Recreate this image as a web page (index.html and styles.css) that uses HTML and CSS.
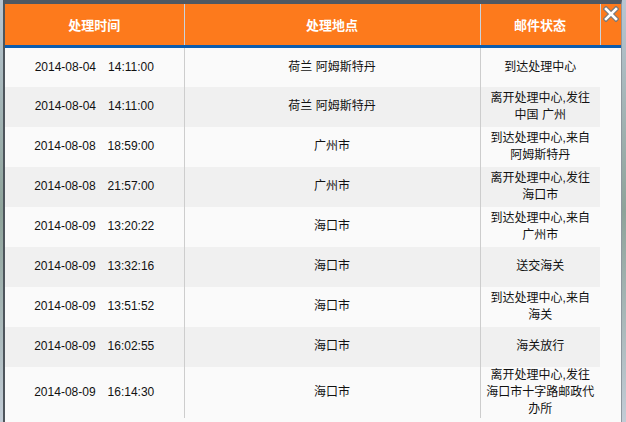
FILE: index.html
```html
<!DOCTYPE html>
<html>
<head>
<meta charset="utf-8">
<link rel="stylesheet" href="styles.css">
</head>
<body>
<div class="window">
  <table class="grid">
    <colgroup>
      <col class="c1"><col class="c2"><col class="c3"><col class="c4">
    </colgroup>
    <thead>
      <tr>
        <th>处理时间</th>
        <th>处理地点</th>
        <th>邮件状态</th>
        <th class="close">
          <svg width="16" height="16" viewBox="0 0 16 16">
            <path d="M3 3 L13 13 M13 3 L3 13" stroke="#7a7a7a" stroke-width="5" stroke-linecap="square"/>
            <path d="M3 3 L13 13 M13 3 L3 13" stroke="#ffffff" stroke-width="2.6" stroke-linecap="square"/>
          </svg>
        </th>
      </tr>
    </thead>
    <tbody>
      <tr><td>2014-08-04<span class="t">14:11:00</span></td><td>荷兰 阿姆斯特丹</td><td class="st">到达处理中心</td><td class="pad"></td></tr>
      <tr><td>2014-08-04<span class="t">14:11:00</span></td><td>荷兰 阿姆斯特丹</td><td class="st">离开处理中心,发往中国 广州</td><td class="pad"></td></tr>
      <tr><td>2014-08-08<span class="t">18:59:00</span></td><td>广州市</td><td class="st">到达处理中心,来自阿姆斯特丹</td><td class="pad"></td></tr>
      <tr><td>2014-08-08<span class="t">21:57:00</span></td><td>广州市</td><td class="st">离开处理中心,发往海口市</td><td class="pad"></td></tr>
      <tr><td>2014-08-09<span class="t">13:20:22</span></td><td>海口市</td><td class="st">到达处理中心,来自广州市</td><td class="pad"></td></tr>
      <tr><td>2014-08-09<span class="t">13:32:16</span></td><td>海口市</td><td class="st">送交海关</td><td class="pad"></td></tr>
      <tr><td>2014-08-09<span class="t">13:51:52</span></td><td>海口市</td><td class="st">到达处理中心,来自海关</td><td class="pad"></td></tr>
      <tr><td>2014-08-09<span class="t">16:02:55</span></td><td>海口市</td><td class="st">海关放行</td><td class="pad"></td></tr>
      <tr><td>2014-08-09<span class="t">16:14:30</span></td><td>海口市</td><td class="st">离开处理中心,发往海口市十字路邮政代办所</td><td class="pad"></td></tr>
    </tbody>
  </table>
</div>
</body>
</html>
```
FILE: styles.css
```css
html, body {
  margin: 0;
  padding: 0;
  height: 100%;
  overflow: hidden;
}
body {
  background: linear-gradient(180deg, #b9c6d2 0%, #8ea39a 50%, #c2ccd6 100%);
  font-family: "Liberation Sans", "Noto Sans CJK SC", sans-serif;
  font-size: 12px;
  color: #111;
}
.window {
  margin-left: 3px;
  width: 616px;
  height: 430px;
  border-left: 2px solid #4e555c;
  border-right: 1px solid #8f979f;
  border-top: 4px solid #4f5862;
  background: #fafafa;
}
.grid {
  border-collapse: collapse;
  table-layout: fixed;
  width: 616px;
}
.c1 { width: 179px; }
.c2 { width: 296px; }
.c3 { width: 120px; }
.c4 { width: 21px; }
thead th {
  background: #fd7a1c;
  color: #fff;
  font-weight: bold;
  font-size: 13px;
  height: 39px;
  padding: 0;
  border-left: 1px solid #c9d3dc;
  border-bottom: 3px solid #0c5cae;
  text-align: center;
  vertical-align: middle;
}
thead th:first-child {
  border-left: none;
}
thead th.close {
  vertical-align: top;
  padding-top: 2px;
  text-align: center;
}
.close svg {
  display: block;
  margin: 0 auto;
}
tbody tr {
  height: 40px;
}
tbody tr:nth-child(odd) td {
  background: #fafafa;
}
tbody tr:nth-child(even) td {
  background: #f0f0f0;
}
tbody td {
  padding: 0 3px;
  line-height: 17px;
  text-align: center;
  vertical-align: middle;
  border-left: 1px solid #cdcdcd;
}
tbody td:first-child {
  border-left: none;
}
tbody td.st {
  padding: 0 5px;
}
.t {
  margin-left: 12px;
}
tbody tr td.pad {
  background: #fafafa;
  border-left: none;
  padding: 0;
}
```
